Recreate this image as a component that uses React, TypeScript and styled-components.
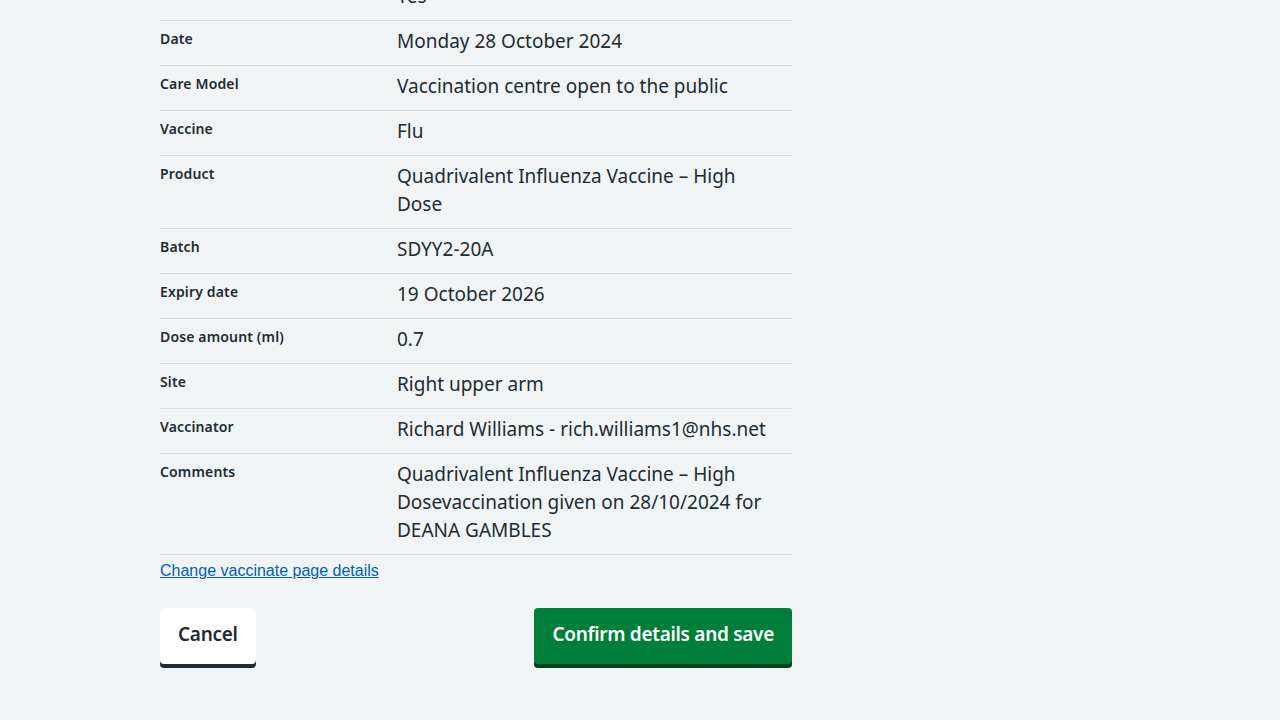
import React from "react";
import styled, { createGlobalStyle } from "styled-components";

const GlobalStyle = createGlobalStyle`
  html, body { margin: 0; padding: 0; background: #f0f4f5; }
  body { font-family: "Noto Sans", "Open Sans", Arial, sans-serif; color: #212b32; }
`;

const Page = styled.div`
  width: 960px;
  margin: 0 auto;
  overflow: hidden;
`;

const Column = styled.div`
  width: 632px;
  margin-top: -24px;
  padding-bottom: 40px;
`;

const List = styled.dl`
  margin: 0;
`;

const Row = styled.div`
  display: grid;
  grid-template-columns: 237px 1fr;
  border-bottom: 1px solid #d8dde0;
`;

const Key = styled.dt`
  font-size: 14px;
  font-weight: 600;
  line-height: 20px;
  letter-spacing: 0.15px;
  padding: 8px 0 8px 0;
`;

const Value = styled.dd`
  margin: 0;
  font-size: 19px;
  line-height: 28px;
  padding: 6px 24px 10px 0;
`;

const ChangeLink = styled.a`
  display: inline-block;
  margin-top: 6px;
  font-family: "Liberation Sans", Arial, sans-serif;
  font-size: 16px;
  line-height: 20px;
  color: #005eb8;
  text-decoration: underline;
`;

const Actions = styled.div`
  display: flex;
  justify-content: space-between;
  align-items: flex-start;
  margin-top: 27px;
`;

const Button = styled.button<{ $variant: "primary" | "secondary" }>`
  font-family: inherit;
  font-size: 19px;
  font-weight: 600;
  line-height: 28px;
  letter-spacing: -0.3px;
  padding: 12px 18px 16px;
  border: none;
  border-radius: 4px;
  cursor: pointer;
  background: ${(p) => (p.$variant === "primary" ? "#007f3b" : "#ffffff")};
  color: ${(p) => (p.$variant === "primary" ? "#ffffff" : "#212b32")};
  box-shadow: 0 4px 0 ${(p) => (p.$variant === "primary" ? "#00401e" : "#212b32")};
`;

const rows: [string, string][] = [
  ["Consent", "Yes"],
  ["Date", "Monday 28 October 2024"],
  ["Care Model", "Vaccination centre open to the public"],
  ["Vaccine", "Flu"],
  ["Product", "Quadrivalent Influenza Vaccine – High Dose"],
  ["Batch", "SDYY2-20A"],
  ["Expiry date", "19 October 2026"],
  ["Dose amount (ml)", "0.7"],
  ["Site", "Right upper arm"],
  ["Vaccinator", "Richard Williams - rich.williams1@nhs.net"],
  [
    "Comments",
    "Quadrivalent Influenza Vaccine – High Dosevaccination given on 28/10/2024 for DEANA GAMBLES",
  ],
];

export default function App() {
  return (
    <>
      <GlobalStyle />
      <Page>
        <Column>
          <List>
            {rows.map(([k, v]) => (
              <Row key={k}>
                <Key>{k}</Key>
                <Value>{v}</Value>
              </Row>
            ))}
          </List>
          <ChangeLink href="#">Change vaccinate page details</ChangeLink>
          <Actions>
            <Button $variant="secondary">Cancel</Button>
            <Button $variant="primary">Confirm details and save</Button>
          </Actions>
        </Column>
      </Page>
    </>
  );
}
